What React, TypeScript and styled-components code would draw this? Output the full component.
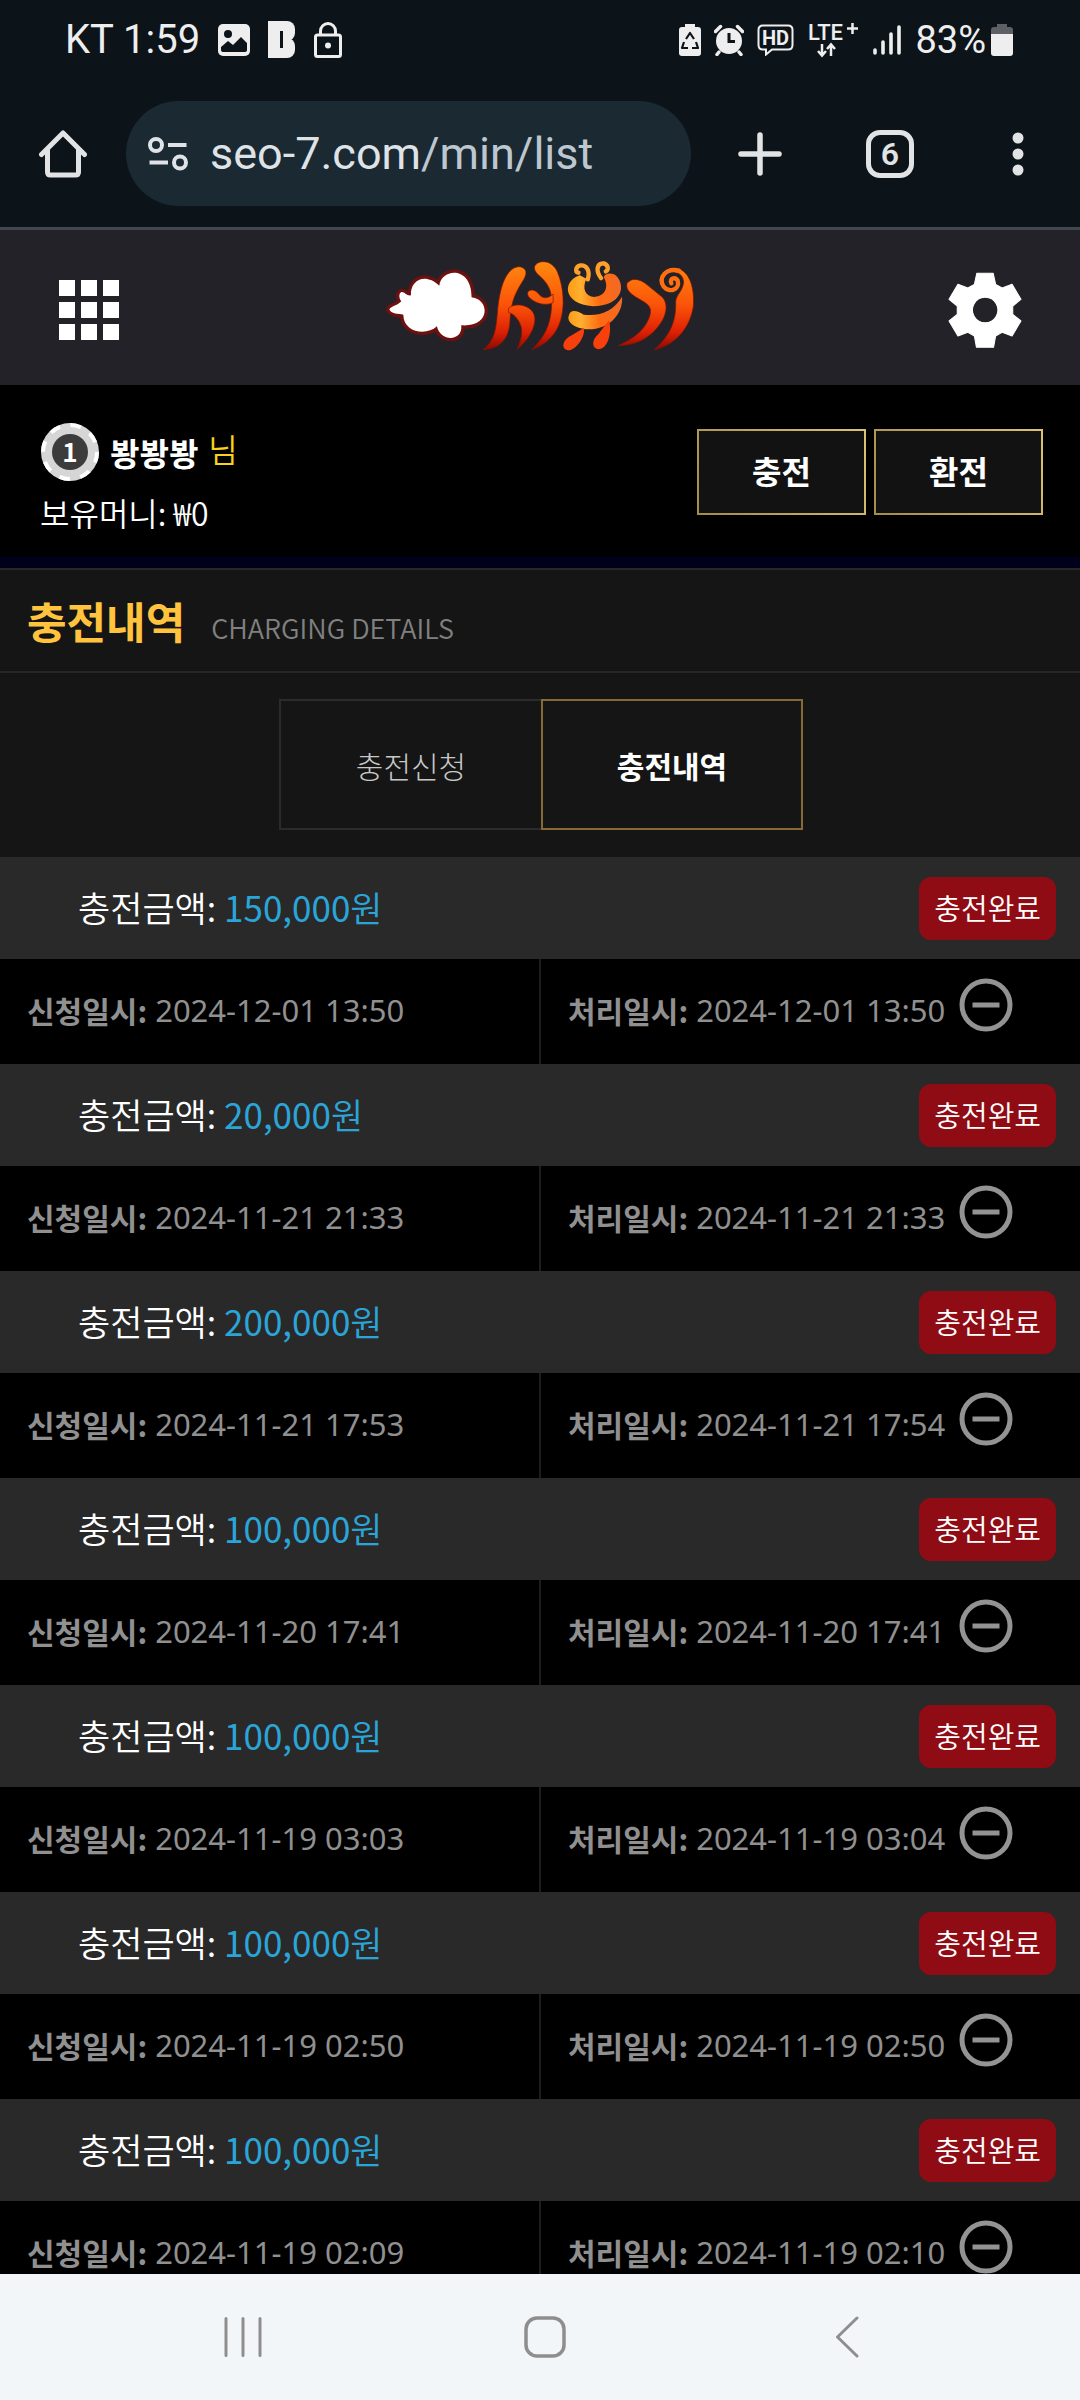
import React from "react";
import styled, { createGlobalStyle, css } from "styled-components";

const KR = `"Noto Sans CJK KR", "Noto Sans", sans-serif`;
const UI = `Roboto, "Noto Sans CJK KR", sans-serif`;

const GlobalStyle = createGlobalStyle`
  *, *::before, *::after { box-sizing: border-box; }
  body { margin: 0; background: #000; font-family: ${KR}; }
  button { margin: 0; padding: 0; border: 0; background: none; color: inherit; font: inherit; cursor: pointer; }
  h1, p, ul, dl, dt, dd { margin: 0; padding: 0; }
  svg { display: block; flex: none; }
`;

const Screen = styled.div`
  display: flex;
  flex-direction: column;
  height: 100vh;
  overflow: hidden;
`;

/* ---------- phone status bar ---------- */

const StatusBar = styled.div`
  display: flex;
  align-items: center;
  justify-content: space-between;
  flex: none;
  height: 80px;
  padding: 0 67px 0 65px;
  background: #0c1319;
  color: #eeeeee;
  font: 400 38px/48px ${UI};
`;

const StatusGroup = styled.div<{ $gap: number }>`
  display: flex;
  align-items: center;
  gap: ${(p) => p.$gap}px;
`;

const Clock = styled.span`
  font-size: 40px;
`;

const BatteryLevel = styled.span`
  display: flex;
  align-items: center;
  gap: 5px;
`;

/* ---------- browser toolbar ---------- */

const Toolbar = styled.div`
  display: flex;
  align-items: center;
  flex: none;
  height: 150px;
  border-bottom: 3px solid #3f484d;
  background: #0c1319;
  color: #e1e3e5;
`;

const HomeButton = styled.button`
  display: flex;
  justify-content: center;
  width: 126px;
`;

const AddressBar = styled.button`
  display: flex;
  align-items: center;
  flex: 1;
  gap: 22px;
  height: 105px;
  margin-right: 4px;
  padding: 0 22px;
  border-radius: 53px;
  background: #1a2932;
  color: #dfe3e7;
  font: 400 45px/52px ${UI};
  text-align: left;
`;

const UrlPath = styled.span`
  color: #bdc7d0;
`;

const ToolButton = styled.button`
  display: flex;
  align-items: center;
  justify-content: center;
  width: 130px;
  height: 105px;

  &:last-child {
    width: 125px;
  }
`;

const TabCount = styled.span`
  display: flex;
  align-items: center;
  justify-content: center;
  width: 48px;
  height: 48px;
  border: 5px solid currentColor;
  border-radius: 14px;
  font: 600 32px/36px ${UI};
`;

/* ---------- site header ---------- */

const Page = styled.main`
  flex: 1;
  min-height: 0;
  overflow-y: auto;
  scrollbar-width: none;
  background: #151515;
`;

const SiteHeader = styled.header`
  display: grid;
  grid-template-columns: 1fr auto 1fr;
  align-items: center;
  height: 155px;
  padding: 5px 58px 0 59px;
  background: #222228;

  > :last-child {
    justify-self: end;
  }
`;

const IconButton = styled.button`
  display: block;
  width: max-content;
  color: #fff;
`;

const MenuDots = styled.span`
  display: grid;
  grid-template-columns: repeat(3, 16px);
  grid-auto-rows: 16px;
  gap: 6px;

  i {
    background: #fff;
  }
`;

/* ---------- member panel ---------- */

const Member = styled.section`
  display: flex;
  align-items: center;
  justify-content: space-between;
  height: 183px;
  padding: 2px 37px 0 40px;
  border-bottom: 11px solid #00001c;
  background: #000;
  color: #fff;
`;

const Profile = styled.div`
  padding-top: 20px;
`;

const MemberName = styled.p`
  display: flex;
  align-items: center;
  gap: 10px;
  height: 60px;
  font-size: 32px;
  line-height: 48px;
`;

const Honorific = styled.span`
  padding-bottom: 8px;
  color: #f8d21c;
  font-size: 32px;
  line-height: 40px;
  font-weight: 350;
`;

const Balance = styled.p`
  height: 60px;
  font-size: 32px;
  line-height: 60px;
  font-weight: 350;
`;

const Actions = styled.div`
  display: flex;
  gap: 8px;
`;

const GoldButton = styled.button`
  width: 169px;
  height: 86px;
  padding-bottom: 4px;
  border: 2px solid;
  border-image: linear-gradient(60deg, #a38d4b, #dcc372) 1;
  background: #121212;
  font-size: 32px;
  line-height: 40px;
  font-weight: 700;
`;

/* ---------- section title and tabs ---------- */

const TitleBar = styled.div`
  display: flex;
  align-items: baseline;
  gap: 26px;
  height: 105px;
  padding: 20px 27px 0;
  border: solid #272727;
  border-width: 2px 0;
`;

const Title = styled.h1`
  color: #ffc33d;
  font-size: 43px;
  line-height: 60px;
  font-weight: 700;
`;

const Subtitle = styled.p`
  color: #808080;
  font-size: 27px;
  line-height: 40px;
  font-weight: 350;
`;

const Tabs = styled.div`
  display: flex;
  justify-content: center;
  padding: 26px 0 27px 2px;
`;

const Tab = styled.button<{ $active?: boolean }>`
  width: 262px;
  height: 131px;
  border: 2px solid #2b2b2b;
  color: #c8c8c8;
  font-size: 30px;
  line-height: 40px;
  font-weight: 300;

  ${(p) =>
    p.$active
      ? css`
          border-color: #866a35;
          color: #fff;
          font-weight: 700;
        `
      : css`
          border-right: 0;
        `}
`;

/* ---------- charge records ---------- */

const Records = styled.ul`
  list-style: none;
`;

const AmountRow = styled.div`
  display: flex;
  align-items: center;
  justify-content: space-between;
  height: 102px;
  padding: 0 24px 0 78px;
  background: #292929;
  color: #fff;
  font-weight: 350;
`;

const AmountText = styled.p`
  padding-bottom: 3px;
  font-size: 35px;
  line-height: 50px;
`;

const Amount = styled.span`
  color: #2ba5d8;
`;

const Digits = styled.span`
  font-weight: 400;
`;

const StatusBadge = styled.span`
  padding: 8px 15px 11px;
  border-radius: 12px;
  background: #8f0c14;
  font-size: 29px;
  line-height: 44px;
`;

const DateRow = styled.dl`
  display: grid;
  grid-template-columns: 1fr 1fr;
  height: 105px;
  background: #000;
  color: #909090;
`;

const DateCell = styled.div`
  display: flex;
  align-items: center;
  gap: 8px;
  padding-left: 27px;
  border: solid #1d1d1d;
  border-width: 0 1px 0 0;
  white-space: nowrap;

  & + & {
    border-width: 0 0 0 1px;
  }

  dt,
  dd {
    padding-bottom: 3px;
  }

  dt {
    font-size: 30px;
    line-height: 40px;
    font-weight: 700;
  }

  dd {
    font: 400 31px/40px "Noto Sans", sans-serif;
  }
`;

const RemoveButton = styled.button`
  margin: 0 0 14px 6px;
  color: #939393;
`;

/* ---------- phone navigation bar ---------- */

const NavBar = styled.nav`
  display: grid;
  grid-template-columns: repeat(3, 1fr);
  flex: none;
  height: 126px;
  padding: 0 82px 0 92px;
  background: #f3f6f9;
  color: #8e8e8e;

  button {
    display: grid;
    place-items: center;
  }
`;

/* ---------- drawings ---------- */

const ImageIcon = () => (
  <svg width="32" height="32" viewBox="0 0 32 32" aria-hidden="true">
    <rect width="32" height="32" rx="5" fill="#eee" />
    <circle cx="10" cy="10" r="4" fill="#0c1319" />
    <path d="M3 23l7-6 5 4 8-8 6 6v7q0 2-3 2H6q-3 0-3-2z" fill="#0c1319" />
  </svg>
);

const AppIcon = () => (
  <svg width="28" height="38" viewBox="0 0 28 38" aria-hidden="true">
    <rect width="16" height="37" fill="#eee" />
    <rect x="4" width="23" height="20" rx="8" fill="#eee" />
    <rect x="4" y="17" width="23" height="20" rx="8" fill="#eee" />
    <rect x="12" y="10" width="3" height="17" fill="#0c1319" />
  </svg>
);

const LockIcon = () => (
  <svg width="28" height="36" viewBox="0 0 28 36" fill="none" stroke="#eee" strokeWidth="3" aria-hidden="true">
    <rect x="1.500" y="13" width="25" height="21.500" rx="2" />
    <path d="M6.500 13V9a7.500 7.500 0 0 1 15 0v4" />
    <circle cx="14" cy="23.500" r="3" fill="#eee" stroke="none" />
  </svg>
);

const RecycleBatteryIcon = () => (
  <svg width="22" height="34" viewBox="0 0 22 34" aria-hidden="true">
    <path d="M6 1h10v3h3q3 0 3 3v23q0 3-3 3H3q-3 0-3-3V7q0-3 3-3h3z" fill="#eee" />
    <path d="M7 16l4-6 4 6M17 19l2 6h-6M9 25H3l2-6" fill="none" stroke="#0c1319" strokeWidth="2.200" strokeLinejoin="round" />
  </svg>
);

const AlarmIcon = () => (
  <svg width="30" height="32" viewBox="0 0 30 32" aria-hidden="true">
    <circle cx="15" cy="17" r="13" fill="#eee" />
    <path d="M1.500 7.500l5-5M28.500 7.500l-5-5M5 28l-2 2.500M25 28l2 2.500" stroke="#eee" strokeWidth="3.500" strokeLinecap="round" />
    <path d="M15 9v8.500h6" fill="none" stroke="#0c1319" strokeWidth="3" />
  </svg>
);

const HdIcon = () => (
  <svg width="37" height="32" viewBox="0 0 37 32" aria-hidden="true">
    <path d="M6 1.500h25q4.500 0 4.500 4.500v15q0 4.500-4.500 4.500H15L9 30.500v-5H6q-4.500 0-4.500-4.500V6Q1.500 1.500 6 1.500z" fill="none" stroke="#eee" strokeWidth="2" />
    <text x="18.500" y="20.500" fill="#eee" textAnchor="middle" fontFamily="Roboto, sans-serif" fontSize="20" fontWeight="700">HD</text>
  </svg>
);

const LteIcon = () => (
  <svg width="53" height="48" viewBox="-1 -6 53 48" aria-hidden="true">
    <text x="0" y="18" fill="#eee" fontFamily="Roboto, sans-serif" fontSize="22" fontWeight="500">LTE</text>
    <path d="M39 6.500h11M44.500 1v11M14 22v11M10 29l4 4.500 4-4.500M23 34V23M19 27l4-4.500 4 4.500" fill="none" stroke="#eee" strokeWidth="2.500" />
  </svg>
);

const SignalIcon = () => (
  <svg width="29" height="32" viewBox="0 0 29 32" aria-hidden="true">
    <path d="M2 26v3M10 18v11M18 10v19M26 3v26" stroke="#eee" strokeWidth="3.600" strokeLinecap="round" />
  </svg>
);

const BatteryIcon = () => (
  <svg width="22" height="34" viewBox="0 0 22 34" aria-hidden="true">
    <path d="M6 1h10v3h3q3 0 3 3v5H0V7q0-3 3-3h3z" fill="#5d6166" />
    <path d="M0 11h22v19q0 3-3 3H3q-3 0-3-3z" fill="#eee" />
  </svg>
);

const HomeIcon = () => (
  <svg width="48" height="48" viewBox="0 0 48 48" fill="none" stroke="currentColor" strokeWidth="5" strokeLinecap="round" strokeLinejoin="round" aria-hidden="true">
    <path d="M2.500 24.500L24 3l21.500 21.500M8.500 20v22q0 3 3 3h25q3 0 3-3V20" />
  </svg>
);

const TuneIcon = () => (
  <svg width="40" height="34" viewBox="0 0 40 34" fill="none" stroke="#dfe3e7" strokeWidth="4" aria-hidden="true">
    <circle cx="8" cy="8" r="6" />
    <circle cx="32" cy="25.500" r="6" />
    <path d="M20 8h18.500M1.500 25.500H20" />
  </svg>
);

const PlusIcon = () => (
  <svg width="44" height="44" viewBox="0 0 44 44" aria-hidden="true">
    <path d="M22 3v38M3 22h38" stroke="currentColor" strokeWidth="5.500" strokeLinecap="round" />
  </svg>
);

const MoreIcon = () => (
  <svg width="12" height="44" viewBox="0 0 12 44" fill="currentColor" aria-hidden="true">
    <circle cx="6" cy="6" r="5.500" />
    <circle cx="6" cy="22" r="5.500" />
    <circle cx="6" cy="38" r="5.500" />
  </svg>
);

const GearIcon = () => (
  <svg width="74" height="76" viewBox="1184 156 216 228" preserveAspectRatio="none" aria-hidden="true">
    <path
      fill="#fff"
      stroke="#fff"
      strokeWidth="3"
      strokeLinejoin="round"
      fillRule="evenodd"
      d="M1268 160H1316L1323 193L1342 204L1371 193L1397 238L1373 258V283L1397 303L1371 348L1342 337L1323 348L1317 382H1267L1261 348L1242 337L1213 348L1187 303L1211 283V258L1187 238L1213 193L1242 204L1261 193ZM1292 232a37 38 0 1 0 1 0z"
    />
  </svg>
);

const Logo = () => (
  <svg width="313" height="100" viewBox="40 60 940 300" role="img" aria-label="서유기">
    <defs>
      <linearGradient id="flame" gradientUnits="userSpaceOnUse" x1="0" y1="65" x2="0" y2="330">
        <stop offset="0" stopColor="#ff8a10" />
        <stop offset="0.500" stopColor="#fa5208" />
        <stop offset="0.800" stopColor="#dc2004" />
        <stop offset="1" stopColor="#8a0800" />
      </linearGradient>
      <linearGradient id="gold" gradientUnits="userSpaceOnUse" x1="590" y1="0" x2="755" y2="0">
        <stop offset="0" stopColor="#ff9a10" />
        <stop offset="0.250" stopColor="#ffb030" />
        <stop offset="0.600" stopColor="#ff6a10" />
        <stop offset="1" stopColor="#f06a28" />
      </linearGradient>
    </defs>
    <path
      d="M56 208C62 198 82 196 92 184C84 174 84 160 92 156C102 154 106 168 121 166C118 122 162 96 206 137C212 84 304 76 303 172C358 178 362 262 272 256C278 306 208 306 199 259C166 290 98 276 98 224C84 222 60 222 56 208Z"
      fill="#fff"
      stroke="#6d1010"
      strokeWidth="20"
      strokeLinejoin="round"
      paintOrder="stroke"
    />
    <g fill="url(#flame)" stroke="#8c1400" strokeWidth="2">
      <path d="M455 82C472 90 468 106 455 126C428 168 420 198 418 248C414 298 388 326 338 329C374 302 376 264 380 226C385 152 400 108 424 88C434 80 447 78 455 82Z" />
      <path d="M414 204C440 184 490 198 493 234C495 268 466 308 440 328C456 290 458 268 446 246C436 228 426 220 414 218Z" />
      <path d="M494 76C506 58 546 60 561 96C580 142 583 200 570 242C556 288 522 316 484 329C522 292 540 254 543 204C546 162 540 138 510 110C495 98 488 86 494 76Z" />
      <path d="M476 152C490 146 500 156 508 166C520 178 535 174 548 162V188C522 200 490 188 474 170C470 162 470 156 476 152Z" />
      <path d="M770 130C784 110 812 118 830 134L876 172C896 194 888 232 860 264C830 300 790 316 744 317C800 290 822 268 836 234C846 208 840 196 815 182C786 166 764 152 770 130Z" />
      <path d="M915 84C960 90 973 148 969 198C960 262 916 316 852 329C902 284 918 242 916 184C918 164 938 152 940 126C938 106 926 98 915 98Z" />
    </g>
    <path d="M926 92C888 82 862 112 880 140C898 162 930 146 922 122C914 108 896 116 903 130" fill="none" stroke="#ff6f10" strokeWidth="13" strokeLinecap="round" />
    <g fill="url(#gold)">
      <path d="M628 106C576 122 574 192 668 199C752 198 768 140 738 108C724 96 702 100 700 112C716 140 706 168 672 171C644 168 634 146 648 116Z" />
      <path d="M596 224C600 206 622 212 640 224C690 230 730 212 755 170C758 216 726 260 666 268C624 270 584 250 596 224Z" />
    </g>
    <path d="M652 118C660 92 648 74 630 76C614 80 614 96 624 98M692 114C674 92 680 68 700 70C716 76 714 90 706 94" fill="none" stroke="#ffa02a" strokeWidth="13" strokeLinecap="round" />
    <g fill="#f8400c">
      <path d="M640 264C646 290 616 331 594 331C570 328 576 300 600 288Z" />
      <path d="M716 240C726 282 710 328 684 328C662 325 664 298 684 282Z" />
    </g>
  </svg>
);

const LevelChip = () => (
  <svg width="60" height="60" viewBox="0 0 60 60" role="img" aria-label="레벨 1">
    <circle cx="30" cy="30" r="29" fill="#d6d6d6" />
    <circle cx="30" cy="30" r="27" fill="none" stroke="#fff" strokeWidth="4" strokeDasharray="10.600 10.600" />
    <circle cx="30" cy="30" r="18" fill="#3c3c3c" />
    <text x="30" y="39.500" fill="#fff" textAnchor="middle" fontFamily="Noto Sans CJK KR, sans-serif" fontSize="26" fontWeight="700">1</text>
  </svg>
);

const MinusCircleIcon = () => (
  <svg width="54" height="54" viewBox="0 0 54 54" fill="none" stroke="currentColor" strokeWidth="5" aria-hidden="true">
    <circle cx="27" cy="27" r="24" />
    <path d="M13.500 27h27" />
  </svg>
);

const RecentsIcon = () => (
  <svg width="40" height="42" viewBox="0 0 40 42" stroke="currentColor" strokeWidth="3" strokeLinecap="round" aria-hidden="true">
    <path d="M3 2.500v37M20 2.500v37M37 2.500v37" />
  </svg>
);

const NavHomeIcon = () => (
  <svg width="42" height="42" viewBox="0 0 42 42" fill="none" stroke="currentColor" strokeWidth="3.500" aria-hidden="true">
    <rect x="2" y="2" width="38" height="38" rx="11" />
  </svg>
);

const BackIcon = () => (
  <svg width="24" height="42" viewBox="0 0 24 42" fill="none" stroke="currentColor" strokeWidth="3" strokeLinecap="round" strokeLinejoin="round" aria-hidden="true">
    <path d="M22 2L2.500 21L22 40" />
  </svg>
);

/* ---------- data ---------- */

const records = [
  { amount: "150,000", requested: "2024-12-01 13:50", processed: "2024-12-01 13:50" },
  { amount: "20,000", requested: "2024-11-21 21:33", processed: "2024-11-21 21:33" },
  { amount: "200,000", requested: "2024-11-21 17:53", processed: "2024-11-21 17:54" },
  { amount: "100,000", requested: "2024-11-20 17:41", processed: "2024-11-20 17:41" },
  { amount: "100,000", requested: "2024-11-19 03:03", processed: "2024-11-19 03:04" },
  { amount: "100,000", requested: "2024-11-19 02:50", processed: "2024-11-19 02:50" },
  { amount: "100,000", requested: "2024-11-19 02:09", processed: "2024-11-19 02:10" },
];

export default function App() {
  return (
    <Screen>
      <GlobalStyle />
      <StatusBar>
        <StatusGroup $gap={18}>
          <Clock>KT 1:59</Clock>
          <ImageIcon />
          <AppIcon />
          <LockIcon />
        </StatusGroup>
        <StatusGroup $gap={13}>
          <RecycleBatteryIcon />
          <AlarmIcon />
          <HdIcon />
          <LteIcon />
          <SignalIcon />
          <BatteryLevel>
            83%
            <BatteryIcon />
          </BatteryLevel>
        </StatusGroup>
      </StatusBar>

      <Toolbar>
        <HomeButton aria-label="홈">
          <HomeIcon />
        </HomeButton>
        <AddressBar>
          <TuneIcon />
          <span>
            seo-7.com<UrlPath>/min/list</UrlPath>
          </span>
        </AddressBar>
        <ToolButton aria-label="새 탭">
          <PlusIcon />
        </ToolButton>
        <ToolButton>
          <TabCount>6</TabCount>
        </ToolButton>
        <ToolButton aria-label="더보기">
          <MoreIcon />
        </ToolButton>
      </Toolbar>

      <Page>
        <SiteHeader>
          <IconButton aria-label="메뉴">
            <MenuDots>
              {Array.from({ length: 9 }, (_, i) => (
                <i key={i} />
              ))}
            </MenuDots>
          </IconButton>
          <Logo />
          <IconButton aria-label="설정">
            <GearIcon />
          </IconButton>
        </SiteHeader>

        <Member>
          <Profile>
            <MemberName>
              <LevelChip />
              <strong>봥봥봥</strong>
              <Honorific>님</Honorific>
            </MemberName>
            <Balance>보유머니: ₩0</Balance>
          </Profile>
          <Actions>
            <GoldButton>충전</GoldButton>
            <GoldButton>환전</GoldButton>
          </Actions>
        </Member>

        <TitleBar>
          <Title>충전내역</Title>
          <Subtitle>CHARGING DETAILS</Subtitle>
        </TitleBar>

        <Tabs role="tablist">
          <Tab role="tab" aria-selected={false}>
            충전신청
          </Tab>
          <Tab role="tab" aria-selected $active>
            충전내역
          </Tab>
        </Tabs>

        <Records>
          {records.map((r, i) => (
            <li key={i}>
              <AmountRow>
                <AmountText>
                  충전금액:{" "}
                  <Amount>
                    <Digits>{r.amount}</Digits>원
                  </Amount>
                </AmountText>
                <StatusBadge>충전완료</StatusBadge>
              </AmountRow>
              <DateRow>
                <DateCell>
                  <dt>신청일시:</dt>
                  <dd>{r.requested}</dd>
                </DateCell>
                <DateCell>
                  <dt>처리일시:</dt>
                  <dd>{r.processed}</dd>
                  <RemoveButton aria-label="내역 삭제">
                    <MinusCircleIcon />
                  </RemoveButton>
                </DateCell>
              </DateRow>
            </li>
          ))}
        </Records>
      </Page>

      <NavBar>
        <button aria-label="최근 앱">
          <RecentsIcon />
        </button>
        <button aria-label="홈 화면">
          <NavHomeIcon />
        </button>
        <button aria-label="뒤로">
          <BackIcon />
        </button>
      </NavBar>
    </Screen>
  );
}
